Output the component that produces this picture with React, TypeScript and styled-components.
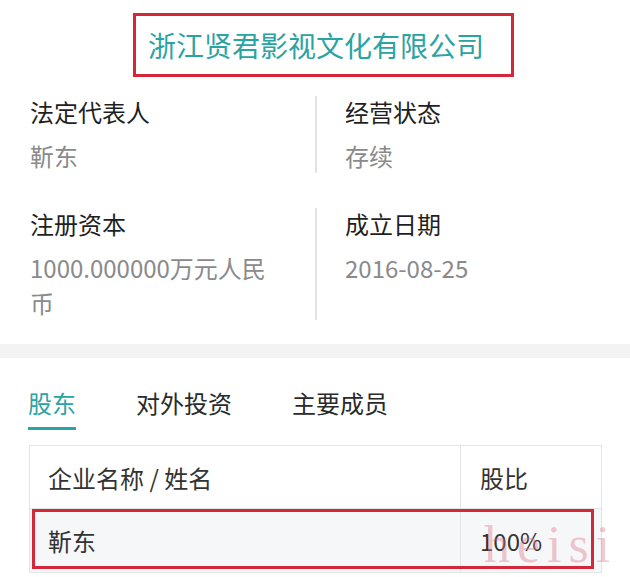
import styled, { createGlobalStyle } from 'styled-components';

const GlobalStyle = createGlobalStyle`
    html, body {
        margin: 0;
        padding: 0;
        background: #ffffff;
    }
    body {
        font-family: "Noto Sans CJK SC", "Noto Sans", sans-serif;
        width: 630px;
        height: 577px;
        overflow: hidden;
    }
`

const infoItems = [
    { label: '法定代表人', value: '靳东' },
    { label: '经营状态', value: '存续' },
    { label: '注册资本', value: '1000.000000万元人民币' },
    { label: '成立日期', value: '2016-08-25' },
]

const tabs = ['股东', '对外投资', '主要成员']

function App() {
    return (
        <Page>
            <GlobalStyle />
            <TitleBox>
                <Title>浙江贤君影视文化有限公司</Title>
            </TitleBox>

            <InfoGrid>
                {infoItems.map((item, i) => (
                    <InfoCell key={item.label} right={i % 2 === 1}>
                        <Label>{item.label}</Label>
                        <Value>{item.value}</Value>
                    </InfoCell>
                ))}
            </InfoGrid>

            <Band />

            <TabBar>
                {tabs.map((t, i) => (
                    <Tab key={t} active={i === 0}>{t}</Tab>
                ))}
            </TabBar>

            <Table>
                <HeadCell>企业名称 / 姓名</HeadCell>
                <HeadCell last>股比</HeadCell>
                <BodyCell>靳东</BodyCell>
                <BodyCell last>100%</BodyCell>
                <RowMark />
            </Table>

            <Watermark>heisi</Watermark>
        </Page>
    )
}

const Page = styled.div`
    position: relative;
    width: 630px;
    height: 577px;
    overflow: hidden;
    background: #ffffff;
`

const TitleBox = styled.div`
    box-sizing: border-box;
    margin: 13px 0 0 133px;
    width: 381px;
    height: 64px;
    border: 3px solid #d3283a;
    padding-left: 12px;
    display: flex;
    align-items: center;
`

const Title = styled.div`
    font-size: 28px;
    line-height: 1;
    color: #2aa3a3;
    white-space: nowrap;
`

const InfoGrid = styled.div`
    margin-top: 19px;
    display: grid;
    grid-template-columns: 315px 1fr;
    row-gap: 35px;
    padding-bottom: 24px;
`

const InfoCell = styled.div<{ right?: boolean }>`
    padding-left: ${p => (p.right ? '28px' : '30px')};
    border-left: ${p => (p.right ? '2px solid #e2e2e2' : 'none')};
    max-width: 250px;
`

const Label = styled.div`
    font-size: 24px;
    line-height: 32px;
    color: #1f1f1f;
    margin-bottom: 10px;
`

const Value = styled.div`
    font-size: 24px;
    line-height: 35px;
    color: #8a8a8a;
`

const Band = styled.div`
    height: 14px;
    background: #f3f3f3;
`

const TabBar = styled.div`
    display: flex;
    gap: 60px;
    padding: 29px 0 0 28px;
`

const Tab = styled.div<{ active?: boolean }>`
    font-size: 24px;
    line-height: 32px;
    color: ${p => (p.active ? '#2aa3a3' : '#2a2a2a')};
    padding-bottom: 8px;
    border-bottom: 3px solid ${p => (p.active ? '#2aa3a3' : 'transparent')};
`

const Table = styled.div`
    position: relative;
    box-sizing: border-box;
    margin: 15px 0 0 29px;
    width: 573px;
    border: 1px solid #e4e4e4;
    display: grid;
    grid-template-columns: 430px 1fr;
    grid-auto-rows: 63px;
`

const HeadCell = styled.div<{ last?: boolean }>`
    display: flex;
    align-items: center;
    padding-left: ${p => (p.last ? '19px' : '18px')};
    font-size: 24px;
    color: #333333;
    border-bottom: 1px solid #e4e4e4;
    border-left: ${p => (p.last ? '1px solid #e4e4e4' : 'none')};
`

const BodyCell = styled(HeadCell)`
    background: #f6f7f9;
    border-bottom: none;
`

const RowMark = styled.div`
    position: absolute;
    left: 2px;
    right: 7px;
    top: 63px;
    height: 60px;
    border: 3px solid #d3283a;
    box-sizing: border-box;
    pointer-events: none;
`

const Watermark = styled.div`
    position: absolute;
    left: 484px;
    top: 519px;
    font-family: "Liberation Serif", serif;
    font-size: 52px;
    letter-spacing: 7px;
    color: rgba(226, 120, 138, 0.4);
    line-height: 1;
    pointer-events: none;
`

export default App;
